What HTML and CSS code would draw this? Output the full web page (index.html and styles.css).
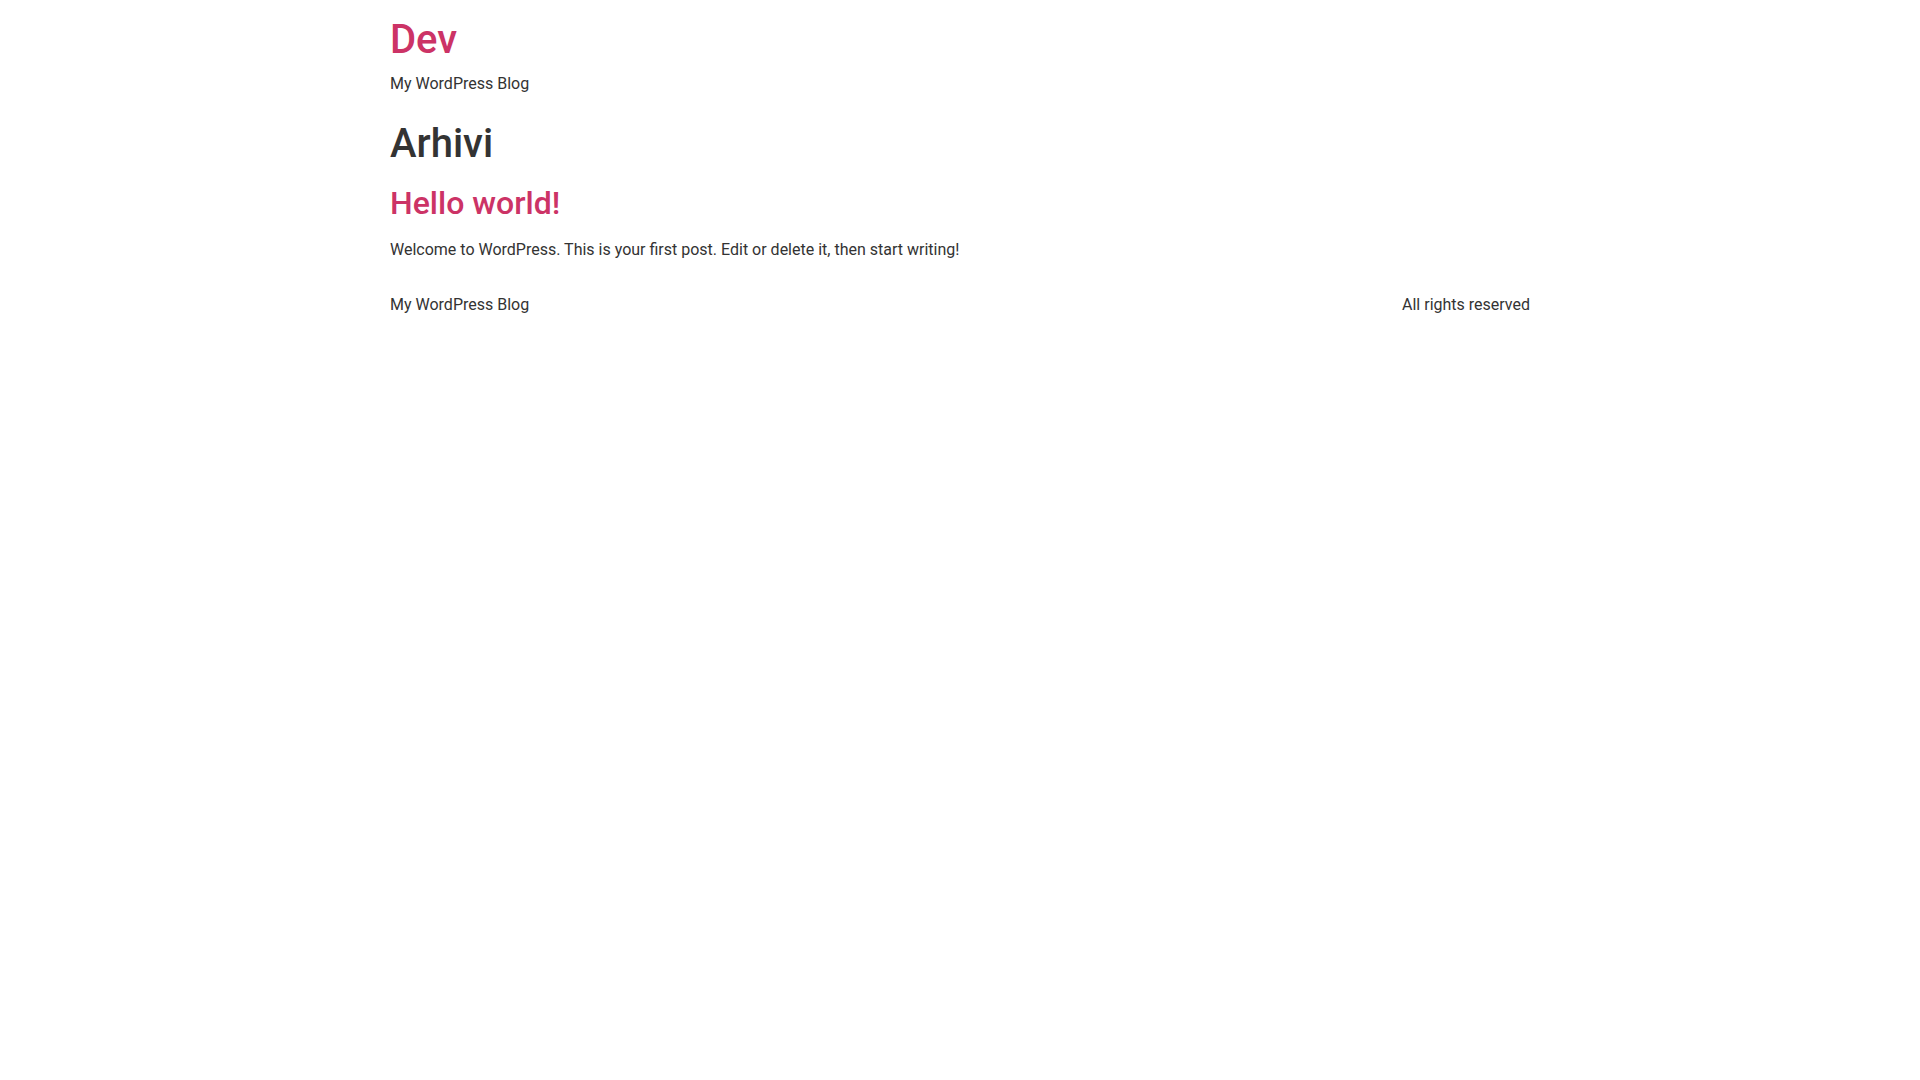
FILE: index.html
```html
<!DOCTYPE html>
<html lang="hr">
<head>
<meta charset="utf-8">
<title>Arhivi – Dev</title>
<link rel="stylesheet" href="styles.css">
</head>
<body>
<header class="site-header">
  <div class="site-title"><a href="#">Dev</a></div>
  <p class="site-description">My WordPress Blog</p>
</header>
<main class="site-main">
  <div class="page-header">
    <h1 class="entry-title">Arhivi</h1>
  </div>
  <article class="post">
    <h2 class="post-title"><a href="#">Hello world!</a></h2>
    <p class="post-excerpt">Welcome to WordPress. This is your first post. Edit or delete it, then start writing!</p>
  </article>
</main>
<footer class="site-footer">
  <p class="footer-blog">My WordPress Blog</p>
  <p class="footer-rights">All rights reserved</p>
</footer>
</body>
</html>
```
FILE: styles.css
```css
html, body {
  margin: 0;
  padding: 0;
  background: #fff;
}
body {
  font-family: Roboto, "Liberation Sans", sans-serif;
  font-size: 16px;
  line-height: 1.5;
  color: #333;
}
a {
  color: #c36;
  text-decoration: none;
}
.site-header,
.site-main,
.site-footer {
  max-width: 1140px;
  margin: 0 auto;
}
.site-header {
  padding: 16px 0;
}
.site-title {
  font-size: 40px;
  font-weight: 500;
  line-height: 1.2;
  margin-bottom: 8px;
}
.site-description {
  margin: 0;
}
.entry-title {
  font-size: 40px;
  font-weight: 500;
  line-height: 1.2;
  margin: 8px 0 16px;
}
.post-title {
  font-size: 32px;
  font-weight: 500;
  line-height: 1.2;
  margin: 8px 0 16px;
}
.post-excerpt {
  margin: 0 0 14.4px;
}
.site-footer {
  display: flex;
  justify-content: space-between;
  padding: 16px 0;
}
.site-footer p {
  margin: 0;
}
```
